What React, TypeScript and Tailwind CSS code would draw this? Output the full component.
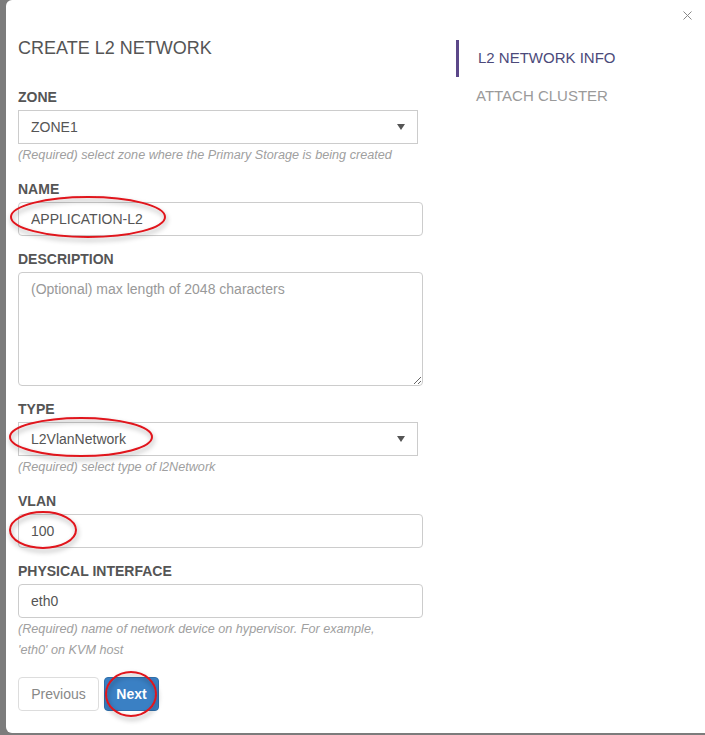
import React from "react";

function Label({ children }: { children: React.ReactNode }) {
  return <div className="mb-[4px] text-[14px] font-bold leading-[18px] text-[#555]">{children}</div>;
}

function Help({ children }: { children: React.ReactNode }) {
  return <div className="mt-[2px] text-[12.65px] italic leading-[18px] text-[#a0a0a0]">{children}</div>;
}

function Select({ value }: { value: string }) {
  return (
    <div className="flex h-[34px] w-[400px] items-center justify-between border border-[#ccc] pl-[12px] pr-[12px] text-[14px] text-[#555]">
      <span>{value}</span>
      <svg width="8" height="6" viewBox="0 0 8 6">
        <path d="M0 0 L8 0 L4 6 Z" fill="#555" />
      </svg>
    </div>
  );
}

function TextInput({ value }: { value: string }) {
  return (
    <input
      readOnly
      defaultValue={value}
      className="h-[34px] w-[405px] rounded-[4px] border border-[#ccc] px-[12px] text-[14px] text-[#555] outline-none"
    />
  );
}

export default function App() {
  return (
    <div className="relative h-[735px] w-[705px] overflow-hidden bg-[#7c7c7c] font-['Liberation_Sans',Arial,sans-serif]">
      <div className="ml-[6px] flex h-[733px] rounded-l-[6px] bg-white">
        <div className="w-[416px] pl-[12px]">
          <h1 className="pt-[38px] text-[18px] leading-[20px] text-[#555]">CREATE L2 NETWORK</h1>

          <div className="mt-[30px]">
            <Label>ZONE</Label>
            <Select value="ZONE1" />
            <Help>(Required) select zone where the Primary Storage is being created</Help>
          </div>

          <div className="mt-[16px]">
            <Label>NAME</Label>
            <TextInput value="APPLICATION-L2" />
          </div>

          <div className="mt-[14px]">
            <Label>DESCRIPTION</Label>
            <textarea
              placeholder="(Optional) max length of 2048 characters"
              className="block h-[114px] w-[405px] rounded-[4px] border border-[#ccc] px-[12px] py-[6px] text-[14px] leading-[20px] text-[#555] outline-none placeholder:text-[#999]"
            />
          </div>

          <div className="mt-[14px]">
            <Label>TYPE</Label>
            <Select value="L2VlanNetwork" />
            <Help>(Required) select type of l2Network</Help>
          </div>

          <div className="mt-[16px]">
            <Label>VLAN</Label>
            <TextInput value="100" />
          </div>

          <div className="mt-[14px]">
            <Label>PHYSICAL INTERFACE</Label>
            <TextInput value="eth0" />
            <div className="mt-[1px] text-[12.65px] italic leading-[21px] text-[#a0a0a0]">
              (Required) name of network device on hypervisor. For example,
              <br />
              'eth0' on KVM host
            </div>
          </div>

          <div className="mt-[16px] flex gap-[5px]">
            <button className="h-[34px] w-[81px] rounded-[4px] border border-[#ddd] bg-white text-[14px] text-[#888]">
              Previous
            </button>
            <button className="h-[34px] w-[55px] rounded-[4px] border border-[#2f6fab] bg-[#3a80c4] text-[14px] font-bold text-white">
              Next
            </button>
          </div>
        </div>

        <nav className="ml-[34px] pt-[40px]">
          <div className="flex h-[37px] items-center border-l-[3px] border-[#5b4789] pl-[19px] text-[15px] text-[#4c4a7a]">
            L2 NETWORK INFO
          </div>
          <div className="flex h-[38px] items-center pl-[20px] text-[15px] text-[#9a9a9a]">ATTACH CLUSTER</div>
        </nav>
      </div>

      <svg className="absolute right-[13px] top-[11px]" width="9" height="9" viewBox="0 0 9 9">
        <path d="M0.5 0.5 L8.5 8.5 M8.5 0.5 L0.5 8.5" stroke="#888" strokeWidth="1" />
      </svg>

      <svg className="pointer-events-none absolute inset-0" width="705" height="735">
        <defs>
          <filter id="sh" x="-20%" y="-30%" width="140%" height="170%">
            <feDropShadow dx="1" dy="3" stdDeviation="2.5" floodColor="#000" floodOpacity="0.35" />
          </filter>
        </defs>
        <g fill="none" stroke="#e0141c" strokeWidth="2" filter="url(#sh)">
          <ellipse cx="88" cy="217" rx="77" ry="20" />
          <ellipse cx="81" cy="437" rx="71" ry="19" />
          <ellipse cx="43" cy="530" rx="33" ry="18" />
          <ellipse cx="131" cy="694" rx="25" ry="22" />
        </g>
      </svg>
    </div>
  );
}
